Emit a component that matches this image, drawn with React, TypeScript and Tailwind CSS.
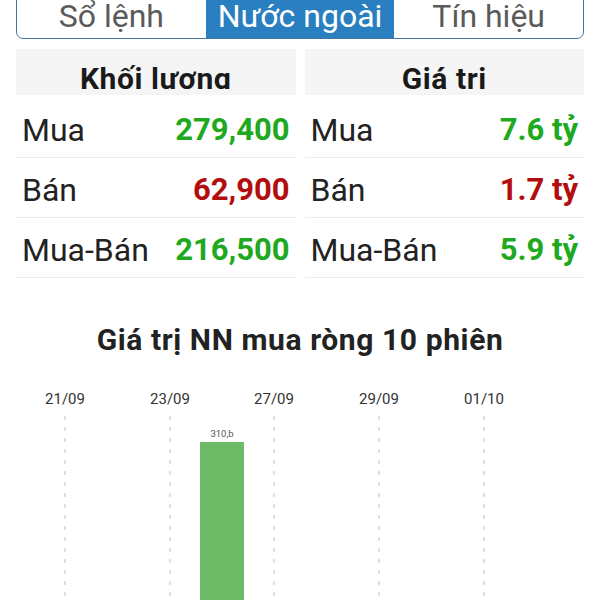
import React from "react";

const rowsL = [
  { l: "Mua", v: "279,400", c: "text-[#1ea91e]" },
  { l: "Bán", v: "62,900", c: "text-[#b30d0d]" },
  { l: "Mua-Bán", v: "216,500", c: "text-[#1ea91e]" },
];
const rowsR = [
  { l: "Mua", v: "7.6 tỷ", c: "text-[#1ea91e]" },
  { l: "Bán", v: "1.7 tỷ", c: "text-[#b30d0d]" },
  { l: "Mua-Bán", v: "5.9 tỷ", c: "text-[#1ea91e]" },
];

function Table({ title, rows }: { title: string; rows: { l: string; v: string; c: string }[] }) {
  return (
    <div className="flex flex-col">
      <div className="h-[46px] bg-[#f5f5f5]">
        <div className="h-[40px] overflow-hidden pt-[17px] text-center text-[30px] font-bold leading-[26px] tracking-[0.6px] text-[#1a1a1a]">
          {title}
        </div>
      </div>
      <div className="mt-[3px] flex flex-col">
        {rows.map((r) => (
          <div
            key={r.l}
            className="flex h-[60px] items-center justify-between border-b border-[#ececec] px-[6px] pt-[4px]"
          >
            <span className="text-[32px] leading-none text-[#222]">{r.l}</span>
            <span className={`text-[31px] font-bold leading-none ${r.c}`}>{r.v}</span>
          </div>
        ))}
      </div>
    </div>
  );
}

function Chart() {
  const xs = [65, 170, 274, 379, 484];
  const labels = ["21/09", "23/09", "27/09", "29/09", "01/10"];
  return (
    <svg width="600" height="230" viewBox="0 0 600 230" className="block">
      {xs.map((x, i) => (
        <g key={i}>
          <text
            x={x}
            y={33}
            textAnchor="middle"
            fontSize="15"
            fill="#333"
            fontFamily="Roboto, sans-serif"
          >
            {labels[i]}
          </text>
          <line
            x1={x}
            y1={45}
            x2={x}
            y2={230}
            stroke="#bdbdbd"
            strokeWidth="1"
            strokeDasharray="4 7"
          />
        </g>
      ))}
      <rect x={200} y={71} width={44} height={170} fill="#6dbb67" />
      <text
        x={222}
        y={66}
        textAnchor="middle"
        fontSize="9.5"
        fill="#555"
        fontFamily="Roboto, sans-serif"
      >
        310,b
      </text>
    </svg>
  );
}

export default function App() {
  return (
    <div className="h-[600px] w-[600px] overflow-hidden bg-white font-['Roboto',sans-serif]">
      <div className="mx-[16px] -mt-[14px] flex h-[53px] overflow-hidden rounded-b-[7px] border border-[#46769f]">
        <div className="flex flex-1 items-center justify-center pt-[7px] text-[32px] leading-none text-[#5a5a5a]">
          Sổ lệnh
        </div>
        <div className="flex flex-1 items-center justify-center bg-[#2a7fc0] pt-[7px] text-[32px] leading-none text-white">
          Nước ngoài
        </div>
        <div className="flex flex-1 items-center justify-center pt-[7px] text-[32px] leading-none text-[#5a5a5a]">
          Tín hiệu
        </div>
      </div>
      <div className="mx-[16px] mt-[10px] grid grid-cols-2 gap-[9px]">
        <Table title="Khối lương" rows={rowsL} />
        <Table title="Giá tri" rows={rowsR} />
      </div>
      <div className="mt-[47px] text-center text-[30px] font-bold leading-none tracking-[0.6px] text-[#222]">
        Giá trị NN mua ròng 10 phiên
      </div>
      <div className="mt-[16px]">
        <Chart />
      </div>
    </div>
  );
}
